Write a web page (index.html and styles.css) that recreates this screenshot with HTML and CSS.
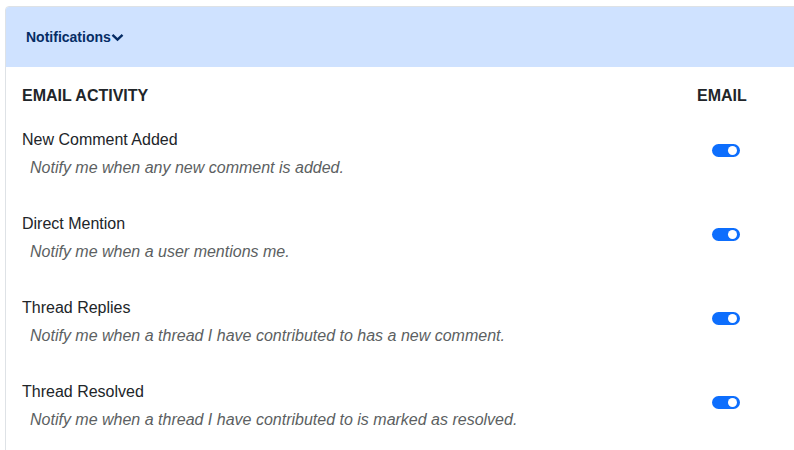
FILE: index.html
```html
<!DOCTYPE html>
<html>
<head>
<meta charset="utf-8">
<link rel="stylesheet" href="styles.css">
</head>
<body>
<div class="card">
  <div class="card-header">
    <span class="title">Notifications</span>
    <svg class="chev" width="13" height="9" viewBox="0 0 13 9"><path d="M1.5 1.8 L6.5 6.6 L11.5 1.8" fill="none" stroke="#052c65" stroke-width="2.4"/></svg>
  </div>
  <div class="card-body">
    <div class="row head">
      <div class="col-main">EMAIL ACTIVITY</div>
      <div class="col-email">EMAIL</div>
    </div>
    <div class="row item">
      <div class="col-main">
        <div class="name">New Comment Added</div>
        <div class="desc">Notify me when any new comment is added.</div>
      </div>
      <div class="col-email"><span class="switch"></span></div>
    </div>
    <div class="row item">
      <div class="col-main">
        <div class="name">Direct Mention</div>
        <div class="desc">Notify me when a user mentions me.</div>
      </div>
      <div class="col-email"><span class="switch"></span></div>
    </div>
    <div class="row item">
      <div class="col-main">
        <div class="name">Thread Replies</div>
        <div class="desc">Notify me when a thread I have contributed to has a new comment.</div>
      </div>
      <div class="col-email"><span class="switch"></span></div>
    </div>
    <div class="row item">
      <div class="col-main">
        <div class="name">Thread Resolved</div>
        <div class="desc">Notify me when a thread I have contributed to is marked as resolved.</div>
      </div>
      <div class="col-email"><span class="switch"></span></div>
    </div>
  </div>
</div>
</body>
</html>
```
FILE: styles.css
```css
* {
  box-sizing: border-box;
}
html, body {
  margin: 0;
  padding: 0;
  background: #fff;
  font-family: "Liberation Sans", Arial, sans-serif;
  color: #212529;
}
body {
  padding: 6px 0 0 5px;
  overflow: hidden;
}
.card {
  width: 820px;
  border: 1px solid #dee2e6;
  border-radius: 4px;
  height: 460px;
  overflow: hidden;
}
.card-header {
  background: #cfe2ff;
  height: 60px;
  display: flex;
  align-items: center;
  padding-left: 20px;
  gap: 0;
}
.title {
  font-weight: bold;
  font-size: 14px;
  color: #052c65;
}
.card-body {
  padding: 20px 0 0 16px;
}
.row {
  display: flex;
  width: 773px;
}
.col-main {
  flex: 1;
}
.col-email {
  width: 98px;
  flex: none;
  display: flex;
  justify-content: flex-start;
}
.head {
  font-weight: bold;
  font-size: 16px;
  line-height: 18px;
  height: 43px;
}
.item {
  height: 84px;
  align-items: flex-start;
}
.name {
  font-size: 16px;
  line-height: 20px;
}
.desc {
  font-size: 16px;
  line-height: 20px;
  font-style: italic;
  color: #5c5f62;
  margin-top: 8px;
  padding-left: 8px;
}
.item .col-email {
  padding-top: 14px;
  padding-left: 15px;
}
.switch {
  display: block;
  width: 28px;
  height: 13px;
  border-radius: 7px;
  background: #0d6efd;
  position: relative;
}
.switch::after {
  content: "";
  position: absolute;
  right: 3px;
  top: 2px;
  width: 9px;
  height: 9px;
  border-radius: 50%;
  background: #fff;
}
```
